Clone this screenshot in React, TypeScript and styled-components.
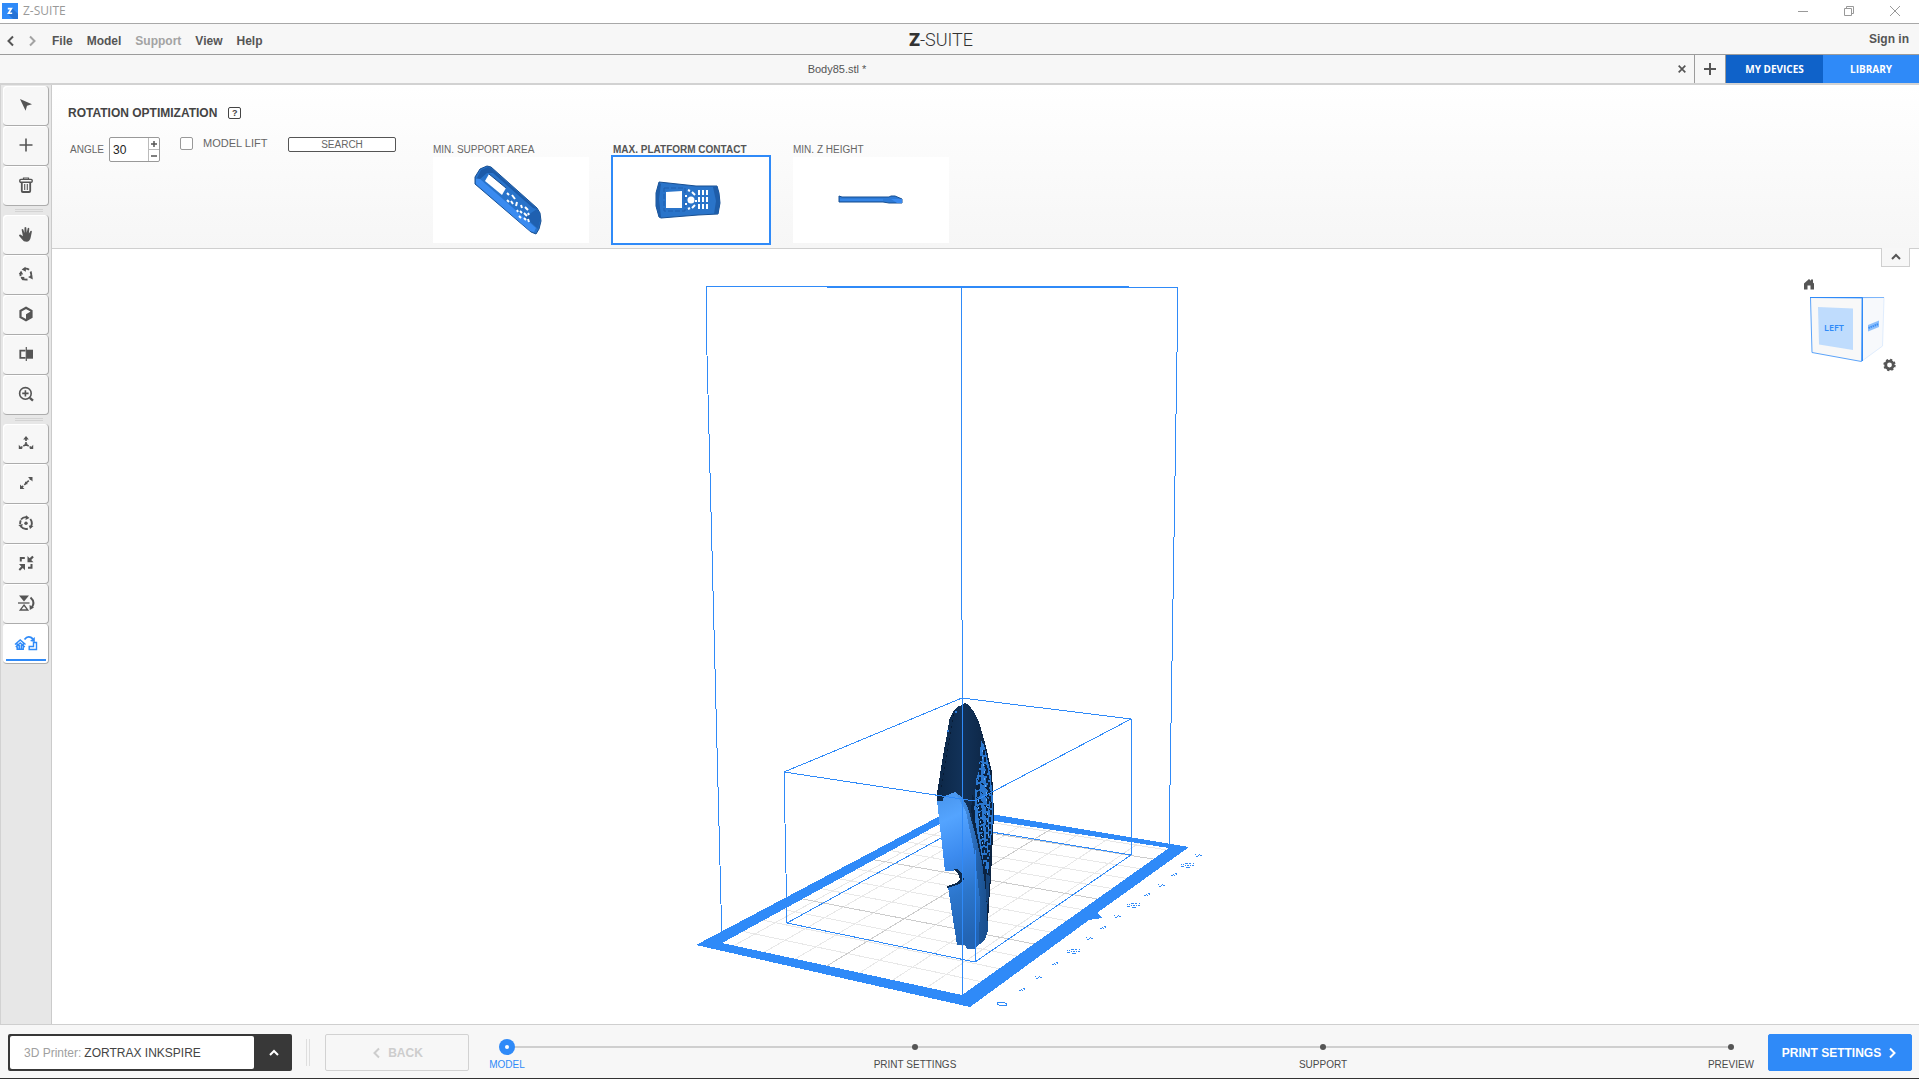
import React, { useState } from "react";
import styled, { createGlobalStyle } from "styled-components";

const blue = "#2f8af8";
const ink = "#555";
const arial = `"Liberation Sans", Arial, sans-serif`;
const segoe = `"Open Sans", "Noto Sans", sans-serif`;

const GlobalStyle = createGlobalStyle`
  * { box-sizing: border-box; }
  body { margin: 0; font-family: ${arial}; font-size: 12px; color: ${ink}; background: #fff; }
  button, input, select { font: inherit; color: inherit; margin: 0; padding: 0; border: 0; background: none; }
  svg { display: block; }
`;

const Shell = styled.div`
  min-height: 100vh;
  display: flex;
  flex-direction: column;
  border-bottom: 1px solid #333;
`;

/* ---------- title bar ---------- */
const TitleBar = styled.header`
  height: 24px;
  display: flex;
  align-items: center;
  gap: 5px;
  padding: 0 18px 2px 2px;
  border-bottom: 1px solid #a8a8a8;
  font-family: ${segoe};
  color: #999;
`;
const WindowButtons = styled.div`
  margin-left: auto;
  display: flex;
  gap: 34px;
`;
const WindowButton = styled.button`
  width: 12px;
  height: 12px;
`;

/* ---------- menu bar ---------- */
const MenuBar = styled.nav`
  height: 31px;
  display: grid;
  grid-template-columns: 1fr auto 1fr;
  align-items: center;
  padding: 0 10px 0 5px;
  background: #f7f7f7;
  border-bottom: 1px solid #9c9c9c;
`;
const MenuList = styled.div`
  display: flex;
  align-items: center;
  gap: 14px;
  padding-top: 4px;
`;
const History = styled.div`
  display: flex;
  gap: 9px;
`;
const MenuButton = styled.button`
  font-weight: bold;
  line-height: 20px;
  color: ${ink};
  &:disabled { color: #a3a3a3; }
`;
const Brand = styled.div`
  margin-right: 32px;
  padding-top: 2px;
  font: 300 18px/20px Roboto, sans-serif;
  color: #333;
  b { font-weight: 900; }
`;
const SignIn = styled.a`
  justify-self: end;
  font-weight: bold;
  line-height: 20px;
  color: ${ink};
  text-decoration: none;
`;

/* ---------- file tabs ---------- */
const TabBar = styled.div`
  height: 30px;
  display: flex;
  background: #f7f7f7;
  border-bottom: 2px solid #d2d2d2;
`;
const FileTab = styled.div`
  flex: 1;
  display: flex;
  align-items: center;
  border-right: 1px solid #9c9c9c;
  font-size: 11px;
`;
const FileName = styled.span`
  flex: 1;
  text-align: center;
  padding-left: 4px;
`;
const CloseTab = styled.button`
  width: 24px;
  height: 28px;
  display: grid;
  place-items: center;
`;
const AddTab = styled.button`
  width: 31px;
  display: grid;
  place-items: center;
  border-right: 1px solid #9c9c9c;
`;
const SideTab = styled.button<{ $tone: string }>`
  width: 97px;
  background: ${(p) => p.$tone};
  color: #fff;
  font: bold 10px/28px ${segoe};
`;
const SideTabs = styled.div`
  display: grid;
  grid-template-columns: 97px 96px;
  ${SideTab} { width: auto; }
`;

/* ---------- body ---------- */
const Body = styled.div`
  flex: 1;
  display: flex;
`;
const Sidebar = styled.aside`
  width: 52px;
  flex: none;
  padding: 1px 2px 0;
  background: #e7e7e7;
  border-left: 1px solid #d2d2d2;
  border-right: 1px solid #cbcbcb;
`;
const Grip = styled.div`
  height: 3px;
  width: 28px;
  margin: 3px 0 3px 12px;
  border: solid #d3d3d3;
  border-width: 1px 0;
`;
const Tool = styled.button<{ $active?: boolean }>`
  display: grid;
  place-items: center;
  width: 46px;
  height: 40px;
  padding-bottom: 1px;
  border: solid #acacac;
  border-width: 0 1px 1px 0;
  border-radius: 4px;
  background: ${(p) => (p.$active ? `linear-gradient(${blue}, ${blue}) 3px 35px / 40px 2px no-repeat #fff` : "#f7f7f7")};
  box-shadow: inset 1px 1px 0 #fff;
  color: ${(p) => (p.$active ? blue : ink)};
`;
const Main = styled.main`
  flex: 1;
  display: flex;
  flex-direction: column;
`;

/* ---------- rotation panel ---------- */
const Panel = styled.section`
  display: flex;
  gap: 35px;
  padding: 0 16px 3px;
  background: linear-gradient(#fff, #f6f6f6);
  border-bottom: 1px solid #cfcfcf;
`;
const Controls = styled.div`
  padding-top: 18px;
`;
const Heading = styled.h1`
  display: flex;
  align-items: center;
  gap: 11px;
  margin: 0;
  font-size: 12px;
  line-height: 20px;
  color: #444;
`;
const HelpButton = styled.button`
  width: 13px;
  height: 12px;
  border: 1px solid #444;
  border-radius: 2px;
  font-size: 9px;
  line-height: 10px;
  font-weight: bold;
`;
const FieldRow = styled.div`
  display: flex;
  align-items: flex-start;
  gap: 20px;
  margin-top: 14px;
  padding-left: 2px;
`;
const AngleField = styled.div`
  display: flex;
  align-items: center;
  label { width: 39px; font-size: 10px; color: #666; }
`;
const Spinner = styled.div`
  display: flex;
  width: 51px;
  height: 25px;
  border: 1px solid #999;
  border-radius: 2px;
  background: #fff;
  input { flex: 1; min-width: 0; padding-left: 3px; color: #222; }
`;
const SpinButtons = styled.div`
  display: grid;
  width: 11px;
  border-left: 1px solid #bbb;
  button { display: grid; place-items: center; }
  button + button { border-top: 1px solid #bbb; }
`;
const CheckField = styled.label`
  display: flex;
  gap: 10px;
  width: 88px;
  font-size: 11px;
  line-height: 13px;
  white-space: nowrap;
  color: #666;
  input {
    appearance: none;
    width: 13px;
    height: 13px;
    border: 1px solid #999;
    border-radius: 2px;
    background: #fff;
  }
`;
const SearchButton = styled.button`
  width: 108px;
  height: 15px;
  border: 1px solid ${ink};
  border-radius: 2px;
  background: #fff;
  font-size: 10px;
  line-height: 13px;
  color: #666;
`;
const Results = styled.div`
  display: flex;
  gap: 20px;
  padding-top: 60px;
`;
const Result = styled.button<{ $selected: boolean }>`
  width: 160px;
  text-align: left;
  font-size: 10px;
  line-height: 10px;
  font-weight: ${(p) => (p.$selected ? "bold" : "normal")};
  color: ${(p) => (p.$selected ? ink : "#666")};
  span { padding-left: 2px; }
  svg {
    width: 160px;
    height: 90px;
    border: 2px solid ${(p) => (p.$selected ? blue : "transparent")};
    background: #fff;
    background-clip: padding-box;
  }
`;

/* ---------- viewport ---------- */
const Viewport = styled.section`
  position: relative;
  flex: 1;
  display: flex;
  justify-content: center;
  align-items: flex-start;
`;
const Collapse = styled.button`
  position: absolute;
  top: -1px;
  right: 9px;
  width: 29px;
  height: 19px;
  display: grid;
  place-items: center;
  background: #f7f7f7;
  border: 1px solid #cfcfcf;
  border-top: 0;
`;
const ViewCube = styled.div`
  position: absolute;
  top: 28px;
  right: 20px;
`;

/* ---------- footer ---------- */
const Footer = styled.footer`
  display: flex;
  align-items: center;
  height: 54px;
  padding: 2px 7px 0 8px;
  background: #f7f7f7;
  border-top: 1px solid #cfcfcf;
`;
const Printer = styled.div`
  display: flex;
  width: 284px;
  height: 37px;
  padding: 2px 0 2px 2px;
  background: #383838;
  border-radius: 2px;
`;
const PrinterField = styled.div`
  flex: 1;
  display: flex;
  align-items: center;
  padding-left: 14px;
  background: #fff;
  border-radius: 2px;
  label { color: #a0a0a0; }
  select { flex: 1; appearance: none; padding-left: 3px; color: #444; }
`;
const PrinterOpen = styled.button`
  width: 38px;
  padding-left: 2px;
  display: grid;
  place-items: center;
  color: #fff;
`;
const FooterGrip = styled.div`
  width: 4px;
  height: 27px;
  margin: 0 15px 0 14px;
  border: solid #dedede;
  border-width: 0 1px;
`;
const WideButton = styled.button<{ $primary?: boolean }>`
  width: 144px;
  height: 37px;
  display: flex;
  align-items: center;
  justify-content: center;
  gap: 5px;
  border-radius: 2px;
  font-weight: bold;
  border: 1px solid ${(p) => (p.$primary ? blue : "#d2d2d2")};
  background: ${(p) => (p.$primary ? blue : "transparent")};
  color: ${(p) => (p.$primary ? "#fff" : "#cdcdcd")};
`;
const Steps = styled.ol`
  flex: 1;
  display: flex;
  justify-content: space-between;
  margin: 0 13px 0 14px;
  padding: 4px 0 0;
  list-style: none;
  background: linear-gradient(#cfcfcf, #cfcfcf) center 12px / calc(100% - 48px) 2px no-repeat;
`;
const Step = styled.li<{ $current: boolean }>`
  width: 48px;
  display: flex;
  flex-direction: column;
  align-items: center;
  gap: 3px;
  font-size: 10px;
  line-height: 12px;
  white-space: nowrap;
  color: ${(p) => (p.$current ? blue : "#4a4a4a")};
`;

/* ---------- icons ---------- */
const Chevron = ({ d, w = 2, size = 12 }: { d: string; w?: number; size?: number }) => (
  <svg width={size} height={size} viewBox="0 0 12 12" fill="none" stroke="currentColor" strokeWidth={w} aria-hidden>
    <path d={d} />
  </svg>
);
const LEFT = "M8 1.500L3.500 6L8 10.500";
const RIGHT = "M4 1.500L8.500 6L4 10.500";
const UP = "M2 8L6 4L10 8";

const Icon = ({ children, w = 16 }: { children: React.ReactNode; w?: number }) => (
  <svg width={w} height="16" viewBox={`0 0 ${w} 16`} fill="none" stroke="currentColor" strokeWidth="1.6" aria-hidden>
    {children}
  </svg>
);
const solid = { fill: "currentColor", stroke: "none" };

const toolGroups: { name: string; icon: React.ReactNode; active?: boolean }[][] = [
  [
    { name: "Select", icon: <Icon><path {...solid} d="M2 2L14 7.200L9 8.800L7.600 13.800Z" /></Icon> },
    { name: "Add model", icon: <Icon><path d="M8 1.500V14.500M1.500 8H14.500" /></Icon> },
    {
      name: "Delete",
      icon: (
        <Icon>
          <path d="M5.500 2V1H10.500V2" strokeWidth="1.200" />
          <rect x="1.800" y="2.400" width="12.400" height="2.800" rx="1" strokeWidth="1.400" />
          <path d="M3.800 5.500V14Q3.800 15 4.800 15H11.200Q12.200 15 12.200 14V5.500" strokeWidth="1.800" />
          <path d="M6.700 7V13M9.300 7V13" strokeWidth="1.100" />
        </Icon>
      ),
    },
  ],
  [
    {
      name: "Pan",
      icon: (
        <Icon>
          <path {...solid} d="M4.500 8L3.600 3.600Q4.400 2.400 5.300 3.600L6.400 7L6.500 1.600Q7.400 .2 8.300 1.600L8.700 6.800L9.700 2.300Q10.800 1.200 11.300 2.600L10.900 7.600L12.500 4.900Q13.700 4.200 13.900 5.500L12.800 11Q12 15.800 8.500 15.800Q5.400 15.800 4.200 13.600L1 9.800Q1.200 8.200 2.800 8.700L4.900 10.200Z" />
        </Icon>
      ),
    },
    {
      name: "Orbit",
      icon: (
        <Icon>
          <path strokeWidth="1.900" d="M6 3Q9 2 11 3.800M12.600 5.500Q14 8.500 12.700 11.500M9.500 13.500Q6 14.200 3.700 12M2.600 10Q2.200 7.600 3.200 6" />
          <path {...solid} d="M7.500 .8L3.600 3.600L8 5.800ZM10 11L14.800 13.500L14.300 9ZM.8 8L3.200 4.800L5.200 8.600ZM4.600 14.500L2.400 10.800L6.600 11Z" />
        </Icon>
      ),
    },
    {
      name: "View",
      icon: (
        <Icon>
          <path strokeWidth="2.200" d="M8 1.700L13.500 4.800V11.200L8 14.300L2.500 11.200V4.800Z" />
          <path {...solid} d="M8 8.200L13.500 5V11.200L8 14.500Z" />
        </Icon>
      ),
    },
    {
      name: "Cross section",
      icon: (
        <Icon>
          <path d="M7.500 4.600H2.300V11.800H7.500" strokeWidth="1.800" />
          <path {...solid} d="M8.500 3.700H15V12.700H8.500Z" />
          <path d="M8.300 1V15" strokeWidth="1.200" />
        </Icon>
      ),
    },
    {
      name: "Zoom",
      icon: (
        <Icon>
          <circle cx="7.400" cy="7.400" r="5.800" />
          <path d="M7.400 4.200V10.600M4.200 7.400H10.600" />
          <path d="M11.800 11.800L15 14.600" strokeWidth="2.400" />
        </Icon>
      ),
    },
  ],
  [
    {
      name: "Move",
      icon: (
        <Icon>
          <path strokeDasharray="2 1" d="M8 9V3M7 10L3 12.500M9 10L13 12.500" />
          <path {...solid} d="M8 1L10.800 4.400H5.200ZM.8 14V9.800L4.600 14ZM15.200 14V9.800L11.400 14ZM6.700 8.400H9.300V11H6.700Z" />
        </Icon>
      ),
    },
    {
      name: "Scale",
      icon: (
        <Icon>
          <path strokeDasharray="2.400 1.400" d="M3.500 12.500L13 3.500" />
          <path {...solid} d="M14.500 2V6.500L10 2ZM2 14V9.500L6.500 14ZM7 6.700H9.400V9.200H7Z" />
        </Icon>
      ),
    },
    {
      name: "Rotate",
      icon: (
        <Icon>
          <path strokeWidth="1.900" d="M3 4.500Q5.500 1.500 9 2.300M12.300 4Q15.300 8 12.600 12M9.800 13.800Q5.500 14.800 3 11.500M2.200 9Q2 7 2.800 5.400" />
          <path {...solid} d="M8 .2L11.500 3L7.500 5ZM10.800 10.500L15.500 11L12 14ZM.3 10L4.800 9L3.500 13Z" />
          <circle {...solid} cx="8" cy="8.200" r="1.700" />
        </Icon>
      ),
    },
    {
      name: "Scale to fit",
      icon: (
        <Icon>
          <path {...solid} d="M9.500 1V7.200H15.500L13.200 5L15.800 2.200L14.300 .8L11.600 3.300ZM7 9V15.200L4.800 13L2 15.700L.6 14.300L3.300 11.500L1 9Z" />
          <path strokeWidth="2" d="M2.800 6.500V3H6.800M10 12.800H13.500V9" />
        </Icon>
      ),
    },
    {
      name: "Mirror",
      icon: (
        <Icon w={18}>
          <path {...solid} d="M2 .5H12L7 6.500Z" />
          <path d="M1 8H12.500" strokeWidth="1.300" />
          <path d="M7 10L10.800 15H3.200Z" strokeWidth="1.300" />
          <path d="M13.500 2.500Q18.500 7 15 12" strokeWidth="2" />
          <path {...solid} d="M12.500 10L17 12.500L12.800 15Z" />
        </Icon>
      ),
    },
    {
      name: "Rotation optimization",
      active: true,
      icon: (
        <Icon w={24}>
          <path strokeWidth="1.500" d="M1 9.500L6.200 5L11.500 9.500M1.800 12L6.200 8L10.800 12M3.200 8.500V14.300H9.200V8.500M5.200 10V14M7.300 10V14" />
          <path strokeWidth="1.800" d="M10.500 4.500Q14.500 -.5 19 4" />
          <path {...solid} d="M20.800 2V7L16 6Z" />
          <path strokeWidth="1.400" d="M19.500 7.500H22.500V14.500H15.200V11.500H19.500Z" />
        </Icon>
      ),
    },
  ],
];

/* ---------- build platform scene ---------- */
type P = [number, number];
const A: P = [962, 995];
const B: P = [1169, 848];
const C: P = [956, 815];
const D: P = [722, 943];
const UNITS_LONG = 13.2;
const UNITS_SHORT = 7.4;

// Projects platform coordinates (centimetres) on the screen quad A-B-C-D.
const project = (() => {
  const dx1 = B[0] - C[0], dx2 = D[0] - C[0], dx3 = A[0] - B[0] + C[0] - D[0];
  const dy1 = B[1] - C[1], dy2 = D[1] - C[1], dy3 = A[1] - B[1] + C[1] - D[1];
  const det = dx1 * dy2 - dx2 * dy1;
  const g = (dx3 * dy2 - dx2 * dy3) / det;
  const h = (dx1 * dy3 - dx3 * dy1) / det;
  return (u: number, v: number): P => {
    const s = u / UNITS_LONG, t = v / UNITS_SHORT, w = g * s + h * t + 1;
    return [
      ((B[0] - A[0] + g * B[0]) * s + (D[0] - A[0] + h * D[0]) * t + A[0]) / w,
      ((B[1] - A[1] + g * B[1]) * s + (D[1] - A[1] + h * D[1]) * t + A[1]) / w,
    ];
  };
})();
const segment = (a: P, b: P) => `M${a[0]} ${a[1]}L${b[0]} ${b[1]}`;
const gridLines = [
  ...Array.from({ length: 13 }, (_, i) => ({ major: (i + 1) % 4 === 0, d: segment(project(i + 1, 0), project(i + 1, UNITS_SHORT)) })),
  ...Array.from({ length: 7 }, (_, i) => ({ major: (i + 1) % 4 === 0, d: segment(project(0, i + 1), project(UNITS_LONG, i + 1)) })),
].sort((a, b) => Number(a.major) - Number(b.major));

const smallMarks: P[] = [[1022, 989], [1038, 977], [1055, 963], [1089, 938], [1103, 927], [1117, 916], [1147, 894], [1161, 885], [1174, 874], [1198, 855]];
const largeMarks: P[] = [[1073, 951], [1133, 905], [1187, 865]];
// Pixel runs of the ruler digits, as [dx, dy, length].
const smallRuns = [[[-3, 1, 2], [-1, 0, 1], [0, 1, 1], [1, -1, 2], [2, 0, 1]], [[-3, -1, 1], [-2, 1, 2], [0, 0, 1], [1, -1, 1], [2, 0, 2]]];
const largeRuns = [[-6, 1, 3], [-4, -1, 1], [-2, -2, 3], [2, -2, 2], [-2, 0, 1], [0, 0, 2], [3, 0, 1], [-1, 2, 4], [5, 0, 2], [6, -2, 1], [-6, -1, 1]];
const runs = (x: number, y: number, list: number[][]) => list.map(([dx, dy, n]) => `M${x + dx} ${y + dy + 0.5}h${n}`).join("");

const Scene = () => (
  <svg width="601" height="775" viewBox="685 249 601 775" shapeRendering="crispEdges" fill="none" role="img" aria-label="Model on the build platform">
    <defs>
      <linearGradient id="front" x1="0" y1="0" x2="0.15" y2="1">
        <stop offset="0" stopColor="#4793ea" />
        <stop offset="0.2" stopColor="#54a4ff" />
        <stop offset="0.45" stopColor="#3c8bef" />
        <stop offset="0.7" stopColor="#2c76cc" />
        <stop offset="1" stopColor="#2264b4" />
      </linearGradient>
      <linearGradient id="back" x1="0" x2="1" y1="0" y2="0">
        <stop offset="0" stopColor="#0c2747" />
        <stop offset="0.45" stopColor="#123259" />
        <stop offset="1" stopColor="#0c2340" />
      </linearGradient>
      <linearGradient id="edge" x1="0" x2="1" y1="0" y2="0">
        <stop offset="0" stopColor="#1c5596" stopOpacity="0" />
        <stop offset="1" stopColor="#1a4f8d" />
      </linearGradient>
    </defs>
    {gridLines.map((l) => (
      <path key={l.d} d={l.d} stroke={l.major ? "#cccccc" : "#e8e8e8"} />
    ))}
    <path fill={blue} fillRule="evenodd" d="M696 945L955 808L1189 847L1097 913L1102 918L1089 920L970 1007ZM722 943L962 995L1169 848L956 815Z" />
    <g stroke={blue}>
      <path d="M784 772L962 698L1131 719M787 923L961 827L1131 855M784 772L787 923L975 962L1131 855V719" />
      <ellipse cx="1002" cy="1004" rx="5" ry="1.600" transform="rotate(8 1002 1004)" />
      {smallMarks.map(([x, y], i) => (
        <path key={x} d={runs(x, y, smallRuns[i % 2])} />
      ))}
      {largeMarks.map(([x, y]) => (
        <path key={x} d={runs(x, y, largeRuns)} />
      ))}
    </g>
    <path fill="url(#back)" d="M958 706L963 705L964 703L968 704L974 712L979 722L985 743L992 772L994 813L991 877L987 930L975 900L937 801L937 793L944 750L948 730L949 720L953 712Z" />
    <path fill="#2b78d0" d="M981 740L984 745L990 770L993 800L993 820L990 850L988 875L984 868L974 815L976 780L979 770Z" />
    <path stroke="#0c2340" strokeWidth="2" strokeDasharray="5 2" d="M981 756L979 790L984 850M984 750L988 790L986 860M987 768L991 806L988 862M977 785L981 838L986 872" />
    <path stroke="#0a1f3a" strokeDasharray="3 3" d="M980 762L991 772M979 770L992 782M977 779L993 794M977 788L993 804M976 797L992 812M976 806L992 822M978 816L990 832M979 826L989 840" />
    <path stroke="#61aeff" strokeDasharray="2 5" d="M982 750L986 790L989 840M978 800L983 845" />
    <path fill="#0b2240" d="M973 790L976 830L984 866L990 878L988 925L984 880L976 840L971 810Z" />
    <path fill="#17457c" d="M986 874L990 876L988 905L986 900Z" />
    <path fill="url(#front)" d="M937 801L943 799L945 796L955 792L962 797L968 808L975 833L982 862L986 893L988 930L985 940L980 944L974 949H967L965 945H957L948 887L958 884L963 878L961 872L955 869L953 871H945Z" />
    <path fill="url(#edge)" d="M955 792L962 797L968 808L975 833L982 862L986 893L988 930L985 940L979 944L980 900L974 850L966 812Z" />
    <path fill="#0d2a4d" d="M937 797H943V801H937ZM953 869H957L962 873L964 879L960 884L953 886L947 888V886L956 883L960 879L958 873Z" />
    <path stroke="#071a33" strokeDasharray="2 4" d="M954 714L948 745L941 790" />
    <path stroke="#2f7ede" strokeWidth="2" d="M947 731H949M955 712H957" />
    <g stroke={blue}>
      <path d="M706.500 286V335L722 943M1177.500 287V322L1169 848M706 286.500H827M827 286.500H1129M827 287.500H1178" />
      <path d="M961.500 287V620" />
      <path d="M962.500 620V995" />
      <path d="M784 772L975 801L1131 719M975.500 850V962" />
    </g>
  </svg>
);

/* ---------- orientation thumbnails ---------- */
const shade = { stroke: "#174f92", strokeWidth: 1 };
const thumbs: { label: string; art: React.ReactNode }[] = [
  {
    label: "MIN. SUPPORT AREA",
    art: (
      <>
        <path {...shade} fill="#2873ca" d="M54 9L58 10L104 51L107 56L108 64L106 72L103 77L98 75L42 27L42 20L47 12Z" />
        <path fill="#3a8bf0" d="M43 22L47 22L103 71L101 75L97 74L43 27Z" />
        <path fill="#1d5ba8" d="M55 10L58 11L104 52L100 51L60 16L54 16L47 22L44 21L48 13Z" />
        <path fill="#1f60b0" d="M92 60L104 52L107 57V64L105 72L103 70Z" />
        <path fill="#fff" d="M56 17L73 31L69 38L52 24Z" />
        <path stroke="#14498a" d="M56 17L73 31" />
        <path stroke="#fff" strokeWidth="2" d="M74 36L76 38M79 38L82 42M78 44L80 47M74 43L76 45M84 45L83 49M88 48L89 51M92 50L95 53M87 54L89 56M91 56L94 59M84 53L85 55M91 61L93 63M95 62L96 65M86 59L88 61M95 56L96 58" />
      </>
    ),
  },
  {
    label: "MAX. PLATFORM CONTACT",
    art: (
      <>
        <path {...shade} fill="#2a74c9" d="M46 25L83 29L104 29L106 36L107 46L105 57L85 58L48 61L46 60L43 49V36Z" />
        <path fill="#1e5da9" d="M100 30L104 29L106 37L107 46L105 57H101L103 44ZM46 26L48 27L46 42L48 60H46L43 49V36Z" />
        <path stroke="#1f5fae" d="M51 31H72V54H51Z" fill="none" strokeDasharray="5 2" />
        <path fill="#fff" d="M53 35L69 34V51H53Z" />
        <circle cx="78" cy="43" r="3.500" fill="#fff" />
        <path stroke="#fff" strokeWidth="2" d="M75 33L77 34M79 35L82 38M79 51L82 48M75 52L77 51M73 38V40M73 46V48M83 43V45" />
        <path stroke="#fff" strokeWidth="2" strokeDasharray="5 2" d="M86 33V54M90 33V54M94 33V53" />
      </>
    ),
  },
  {
    label: "MIN. Z HEIGHT",
    art: (
      <>
        <path {...shade} fill="#2d7ad6" d="M46 39L49 40H96L98 39L102 39L109 42V46L104 46L96 46L90 45H46Z" />
        <path stroke="#3f90f5" d="M47 43H90" />
        <path fill="#3a8af0" d="M98 42H109V46H104Z" />
      </>
    ),
  },
];

const steps = ["MODEL", "PRINT SETTINGS", "SUPPORT", "PREVIEW"];

export default function App() {
  const [selected, setSelected] = useState(1);
  const [angle, setAngle] = useState(30);
  const [lift, setLift] = useState(false);
  return (
    <Shell>
      <GlobalStyle />
      <TitleBar>
        <svg width="16" height="16" viewBox="0 0 16 16" aria-hidden>
          <path fill={blue} d="M0 0H16V16H0Z" />
          <path fill="#2472d6" d="M10 5L16 11V16H11L6 11Z" />
          <path fill="none" stroke="#fff" strokeWidth="1.600" d="M5.800 5.600H9.400L6.500 10.200H10.200" />
        </svg>
        Z-SUITE
        <WindowButtons>
          <WindowButton aria-label="Minimize"><Chevron w={1} d="M1 6.500H11" /></WindowButton>
          <WindowButton aria-label="Restore"><Chevron w={1} d="M1.500 3.500H8.500V10.500H1.500ZM3.500 3.500V1.500H10.500V8.500H8.500" /></WindowButton>
          <WindowButton aria-label="Close"><Chevron w={1} d="M1 1L11 11M11 1L1 11" /></WindowButton>
        </WindowButtons>
      </TitleBar>

      <MenuBar>
        <MenuList>
          <History>
            <MenuButton aria-label="Undo"><Chevron d={LEFT} /></MenuButton>
            <MenuButton aria-label="Redo" disabled><Chevron d={RIGHT} /></MenuButton>
          </History>
          <MenuButton>File</MenuButton>
          <MenuButton>Model</MenuButton>
          <MenuButton disabled>Support</MenuButton>
          <MenuButton>View</MenuButton>
          <MenuButton>Help</MenuButton>
        </MenuList>
        <Brand><b>Z</b>-SUITE</Brand>
        <SignIn href="#sign-in">Sign in</SignIn>
      </MenuBar>

      <TabBar>
        <FileTab>
          <FileName>Body85.stl *</FileName>
          <CloseTab aria-label="Close file"><Chevron w={2} size={10} d="M2 2L10 10M10 2L2 10" /></CloseTab>
        </FileTab>
        <AddTab aria-label="New tab"><Chevron w={2} d="M6 0V12M0 6H12" /></AddTab>
        <SideTabs>
          <SideTab $tone="#0f62c9">MY DEVICES</SideTab>
          <SideTab $tone={blue}>LIBRARY</SideTab>
        </SideTabs>
      </TabBar>

      <Body>
        <Sidebar>
          {toolGroups.map((group, i) => (
            <React.Fragment key={i}>
              {i > 0 && <Grip />}
              {group.map((t) => (
                <Tool key={t.name} aria-label={t.name} $active={t.active}>{t.icon}</Tool>
              ))}
            </React.Fragment>
          ))}
        </Sidebar>

        <Main>
          <Panel>
            <Controls>
              <Heading>
                ROTATION OPTIMIZATION
                <HelpButton>?</HelpButton>
              </Heading>
              <FieldRow>
                <AngleField>
                  <label htmlFor="angle">ANGLE</label>
                  <Spinner>
                    <input id="angle" value={angle} onChange={(e) => setAngle(Number(e.target.value) || 0)} />
                    <SpinButtons>
                      <button aria-label="Increase angle" onClick={() => setAngle(angle + 1)}><Chevron size={6} w={3} d="M6 0V12M0 6H12" /></button>
                      <button aria-label="Decrease angle" onClick={() => setAngle(angle - 1)}><Chevron size={6} w={3} d="M0 6H12" /></button>
                    </SpinButtons>
                  </Spinner>
                </AngleField>
                <CheckField>
                  <input type="checkbox" checked={lift} onChange={() => setLift(!lift)} />
                  MODEL LIFT
                </CheckField>
                <SearchButton>SEARCH</SearchButton>
              </FieldRow>
            </Controls>
            <Results>
              {thumbs.map((t, i) => (
                <Result key={t.label} $selected={i === selected} onClick={() => setSelected(i)}>
                  <span>{t.label}</span>
                  <svg viewBox="0 0 156 86" aria-hidden>{t.art}</svg>
                </Result>
              ))}
            </Results>
          </Panel>

          <Viewport>
            <Scene />
            <Collapse aria-label="Collapse panel"><Chevron d={UP} /></Collapse>
            <ViewCube>
              <svg width="100" height="98" viewBox="1799 277 100 98" role="img" aria-label="View cube">
                <path fill={ink} d="M1809 279L1814 283.500V289.500H1810.500V285.500H1807.500V289.500H1804V283.500ZM1811 279.500H1813V283H1811Z" />
                <path fill="#f7f9fc" stroke="#e0edfd" d="M1862 298L1884 297.500L1882.500 346L1862 361Z" />
                <path fill="#f8f8f8" stroke="#5ba3f9" d="M1810.500 297.500L1862 298L1861.500 361.500L1812 352.500Z" />
                <path stroke="#7db5fa" d="M1862 297.500H1884" fill="none" />
                <path stroke={blue} d="M1810 297.500H1862.500V361" fill="none" />
                <path fill="#bfdcfd" d="M1818 307L1853 308.500V350L1819 344.500Z" />
                <text x="1824" y="331" fill={blue} fontFamily="Open Sans, sans-serif" fontSize="9" fontWeight="600">LEFT</text>
                <path fill="#8dbffb" d="M1868 325L1879 320.500V327L1868 331.500Z" />
                <path stroke="#3c8ef5" strokeWidth="2" strokeDasharray="1.500 .7" fill="none" d="M1868.500 328L1878.500 324" />
                <circle cx="1889.500" cy="365" r="3.800" fill="none" stroke={ink} strokeWidth="2.800" />
                <circle cx="1889.500" cy="365" r="5.300" fill="none" stroke={ink} strokeWidth="1.800" strokeDasharray="2.160 2" />
              </svg>
            </ViewCube>
          </Viewport>
        </Main>
      </Body>

      <Footer>
        <Printer>
          <PrinterField>
            <label htmlFor="printer">3D Printer:</label>
            <select id="printer" defaultValue="inkspire">
              <option value="inkspire">ZORTRAX INKSPIRE</option>
            </select>
          </PrinterField>
          <PrinterOpen aria-label="Choose printer"><Chevron d={UP} /></PrinterOpen>
        </Printer>
        <FooterGrip />
        <WideButton disabled><Chevron d={LEFT} />BACK</WideButton>
        <Steps>
          {steps.map((s, i) => (
            <Step key={s} $current={i === 0}>
              <svg width="18" height="18" viewBox="0 0 18 18" aria-hidden>
                <circle cx="9" cy="9" r={i ? 3 : 8} fill={i ? ink : blue} />
                {i === 0 && <circle cx="9" cy="9" r="2" fill="#fff" />}
              </svg>
              {s}
            </Step>
          ))}
        </Steps>
        <WideButton $primary>PRINT SETTINGS<Chevron d={RIGHT} /></WideButton>
      </Footer>
    </Shell>
  );
}
